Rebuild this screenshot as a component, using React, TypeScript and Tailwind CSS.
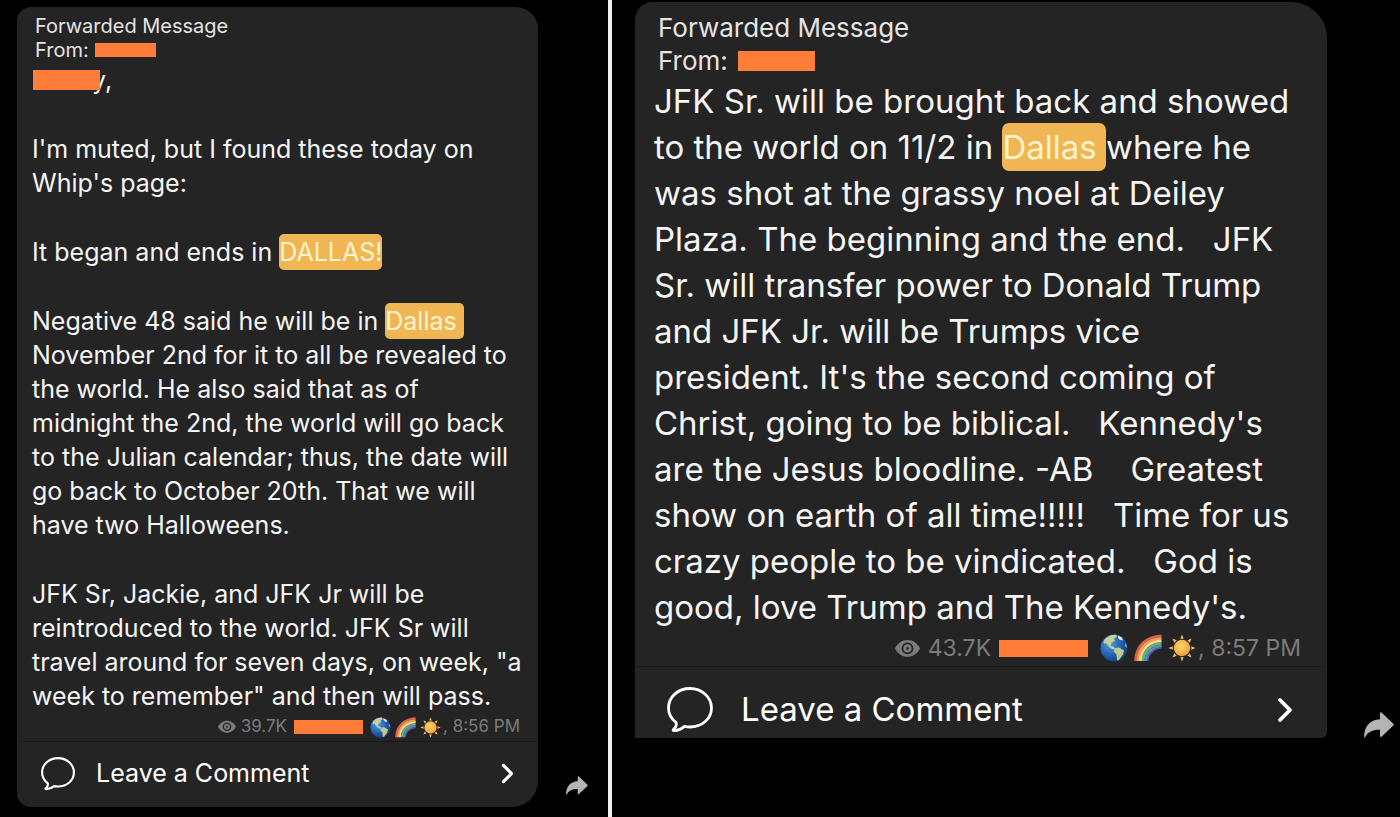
import type { ReactNode } from "react";
import clsx from "clsx";

type Size = "small" | "large";

interface IconProps {
  className?: string;
}

const EyeIcon = ({ className }: IconProps) => (
  <svg viewBox="0 0 24 18" className={className} aria-hidden="true">
    <path
      fill="currentColor"
      fillRule="evenodd"
      d="M12 1C6.800 1 2.400 4.200 0 9c2.400 4.800 6.800 8 12 8s9.600-3.200 12-8c-2.400-4.800-6.800-8-12-8Zm0 2.300a5.700 5.700 0 1 1 0 11.400a5.700 5.700 0 0 1 0-11.400Z"
    />
    <circle cx="12" cy="9" r="2.600" fill="none" stroke="currentColor" strokeWidth="2.600" />
  </svg>
);

const GlobeIcon = ({ className }: IconProps) => (
  <svg viewBox="0 0 28 28" className={className} aria-hidden="true">
    <defs>
      <radialGradient id="ocean" cx="0.350" cy="0.350" r="0.700">
        <stop offset="0" stopColor="#4d9be0" />
        <stop offset="0.600" stopColor="#2260b4" />
        <stop offset="1" stopColor="#173a7c" />
      </radialGradient>
    </defs>
    <circle cx="14" cy="14" r="13.500" fill="url(#ocean)" />
    <path
      fill="#c6cf9d"
      d="M5 5c3-3 7-4.500 11-4.200l1 2.200-3 1.500 1 2-3.500 2.500-1 3 3 .5 1.500 2.500-2 .5-4-2.500-3-4-2 1C3 8 4 6 5 5Z"
    />
    <path fill="#dde6df" d="m18 1.500 4 2 1 3-3-.5-2-2Z" />
    <path fill="#bccb8b" d="m15 14 4-.5 5 3-1 4-4 5.500-2 .5-.5-6-3-3Z" />
    <path fill="#8fb57d" d="m25 9 1.500 2 .5 3-2-2Z" />
  </svg>
);

const RainbowIcon = ({ className }: IconProps) => (
  <svg viewBox="0 0 28 28" className={className} aria-hidden="true">
    <g fill="none" strokeWidth="2.800">
      <path stroke="#d8604f" d="M1.500 27C2 12 12 2.500 27.500 1.800" />
      <path stroke="#ee9d58" d="M4 27C4.500 13.500 13.500 5 27.500 4.300" />
      <path stroke="#f3dc8c" d="M6.500 27C7 15 15 7.500 27.500 6.800" />
      <path stroke="#6fae74" d="M9 27C9.500 17 17 10 27.500 9.300" />
      <path stroke="#4c93c6" d="M11.500 27C12 19 18.500 12.500 27.500 11.800" />
      <path stroke="#6b5795" strokeWidth="1.600" d="M13.600 27C14 20.500 19.500 14.600 27.500 13.800" />
    </g>
  </svg>
);

const SunIcon = ({ className }: IconProps) => (
  <svg viewBox="0 0 28 28" className={className} aria-hidden="true">
    <defs>
      <radialGradient id="sun" cx="0.450" cy="0.400" r="0.600">
        <stop offset="0" stopColor="#ffd768" />
        <stop offset="1" stopColor="#f0a03a" />
      </radialGradient>
    </defs>
    {[0, 45, 90, 135, 180, 225, 270, 315].map((angle) => (
      <path
        key={angle}
        d="m14 0.500 1.700 4.200h-3.400Z"
        fill="#f1c069"
        transform={`rotate(${angle} 14 14)`}
      />
    ))}
    <circle cx="14" cy="14" r="8.200" fill="url(#sun)" />
  </svg>
);

const CommentIcon = ({ className }: IconProps) => (
  <svg viewBox="0 0 46 46" className={className} aria-hidden="true">
    <path
      fill="none"
      stroke="currentColor"
      strokeWidth="2.800"
      strokeLinejoin="round"
      d="M23 1.500C11 1.500 1.500 10 1.500 21c0 6 3 11 7.700 14.600c.6 3-.9 5.300-2.700 6.800c-.7.700-.3 1.400.7 1.300c4.200-.3 7.800-2 10.300-4.300c1.800.4 3.600.6 5.500.6c12 0 21.500-8.200 21.500-19S35 1.500 23 1.500Z"
    />
  </svg>
);

const ChevronIcon = ({ className }: IconProps) => (
  <svg viewBox="0 0 16 26" className={className} aria-hidden="true">
    <path
      fill="none"
      stroke="currentColor"
      strokeWidth="3.800"
      strokeLinecap="round"
      strokeLinejoin="round"
      d="m3 3 10 10L3 23"
    />
  </svg>
);

const ShareIcon = ({ className }: IconProps) => (
  <svg viewBox="0 0 30 26" className={className} aria-hidden="true">
    <path
      fill="currentColor"
      d="M16 1.200c0-1 .8-1.200 1.500-.6l11.800 11.200c.6.600.6 1.200 0 1.800L17.500 24.700c-.7.600-1.500.3-1.500-.6v-6.300C9 17.600 4.200 19.500 1.200 25c-.4.700-1.100.6-1.100-.2C.2 15 5.500 7.800 16 7.300Z"
    />
  </svg>
);

const Redacted = ({ className }: IconProps) => (
  <span
    role="img"
    aria-label="Name removed"
    className={clsx("inline-block shrink-0 bg-[#ff7d38]", className)}
  />
);

const Highlight = ({ size, children }: { size: Size; children: ReactNode }) => (
  <mark
    className={clsx(
      "bg-[#f0b654] text-[#fff3cf]",
      size === "small" ? "rounded-[5px] py-[3px]" : "rounded-[7px] py-1",
    )}
  >
    {children}
  </mark>
);

interface MessageProps {
  size: Size;
  views: string;
  time: string;
  children: ReactNode;
}

const Message = ({ size, views, time, children }: MessageProps) => {
  const small = size === "small";
  const emoji = small ? "size-[21px]" : "size-7";

  return (
    <article
      className={clsx(
        "min-w-0 flex-1 overflow-hidden bg-[#242424]",
        small
          ? "rounded-[14px] rounded-tr-[22px] rounded-br-[26px]"
          : "rounded-t-[18px] rounded-tr-[36px] rounded-br-[6px]",
      )}
    >
      <header
        className={clsx(
          "whitespace-nowrap text-[#e4e4e4]",
          small
            ? "px-[18px] pt-[7px] text-[20px] leading-6"
            : "px-[23px] pt-[9px] text-[26px] leading-[33px]",
        )}
      >
        <p>Forwarded Message</p>
        <p className="flex items-center">
          From:
          <Redacted
            className={small ? "ml-[6px] h-[14px] w-[61px]" : "ml-[10px] h-5 w-[77px]"}
          />
        </p>
      </header>

      <div
        className={clsx(
          "flex flex-col whitespace-pre text-[#f5f5f5]",
          small
            ? "gap-[35px] px-[15px] pt-px text-[25px] leading-[34px]"
            : "px-[19px] pt-px text-[33px] leading-[46px]",
        )}
      >
        {children}
      </div>

      <footer
        className={clsx(
          "flex items-center justify-end whitespace-nowrap text-[#7b7b7b]",
          small
            ? "h-[28px] gap-1 pr-[18px] text-[17px]"
            : "h-[36px] gap-[6px] pr-[26px] text-[23px]",
        )}
      >
        <EyeIcon className={small ? "w-[18px]" : "w-[25px]"} />
        <span className={small ? "ml-px" : "ml-[2px]"}>{views}</span>
        <Redacted
          className={small ? "mx-[3px] h-[14px] w-[69px]" : "mr-[6px] ml-[2px] h-[17px] w-[89px]"}
        />
        <GlobeIcon className={emoji} />
        <RainbowIcon className={emoji} />
        <SunIcon className={emoji} />
        <span className={small ? "-ml-[2px]" : "-ml-1"}>, {time}</span>
      </footer>

      <button
        type="button"
        className={clsx(
          "flex w-full items-center border-t border-[#181818] text-left text-white",
          small
            ? "h-[66px] gap-[21px] pr-6 pb-[2px] pl-6 text-[25px]"
            : "h-[72px] gap-7 pt-[14px] pr-[34px] pl-8 text-[33px]",
        )}
      >
        <CommentIcon className={small ? "w-[34px]" : "w-[46px]"} />
        <span className="flex-1">Leave a Comment</span>
        <ChevronIcon className={small ? "w-[13px]" : "w-4"} />
      </button>
    </article>
  );
};

export default function App() {
  return (
    <main className="grid min-h-screen grid-cols-[minmax(0,608fr)_4px_minmax(0,788fr)] bg-black font-['Inter',sans-serif]">
      <section className="flex items-end gap-7 self-start pt-[7px] pr-5 pb-[10px] pl-[17px]">
        <Message size="small" views="39.7K" time="8:56 PM">
          <p className="flex items-center">
            <Redacted className="z-10 -mr-2 ml-px h-5 w-[67px]" />
            y,
          </p>
          <p>{`I'm muted, but I found these today on
Whip's page:`}</p>
          <p>
            It began and ends in <Highlight size="small">DALLAS!</Highlight>
          </p>
          <p>
            Negative 48 said he will be in{" "}
            <Highlight size="small">{"Dallas "}</Highlight>
            {`
November 2nd for it to all be revealed to
the world. He also said that as of
midnight the 2nd, the world will go back
to the Julian calendar; thus, the date will
go back to October 20th. That we will
have two Halloweens.`}
          </p>
          <p>{`JFK Sr, Jackie, and JFK Jr will be
reintroduced to the world. JFK Sr will
travel around for seven days, on week, "a
week to remember" and then will pass.`}</p>
        </Message>
        <button type="button" aria-label="Share" className="mb-3 text-[#b4b4b4]">
          <ShareIcon className="w-[22px]" />
        </button>
      </section>

      <div className="bg-[#f0f0f0]" />

      <section className="flex items-end gap-[37px] self-start pt-[2px] pr-[6px] pl-[23px]">
        <Message size="large" views="43.7K" time="8:57 PM">
          <p>
            <span className="block">JFK Sr. will be brought back and showed</span>
            <span className="block">
              <span>to the world on 11/2 in </span>
              <Highlight size="large">{"Dallas "}</Highlight>
              <span>where he</span>
            </span>
            <span className="block">{`was shot at the grassy noel at Deiley
Plaza. The beginning and the end.   JFK
Sr. will transfer power to Donald Trump
and JFK Jr. will be Trumps vice
president. It's the second coming of
Christ, going to be biblical.   Kennedy's
are the Jesus bloodline. -AB    Greatest
show on earth of all time!!!!!   Time for us
crazy people to be vindicated.   God is
good, love Trump and The Kennedy's.`}</span>
          </p>
        </Message>
        <button type="button" aria-label="Share" className="text-[#b4b4b4]">
          <ShareIcon className="w-[30px]" />
        </button>
      </section>
    </main>
  );
}
